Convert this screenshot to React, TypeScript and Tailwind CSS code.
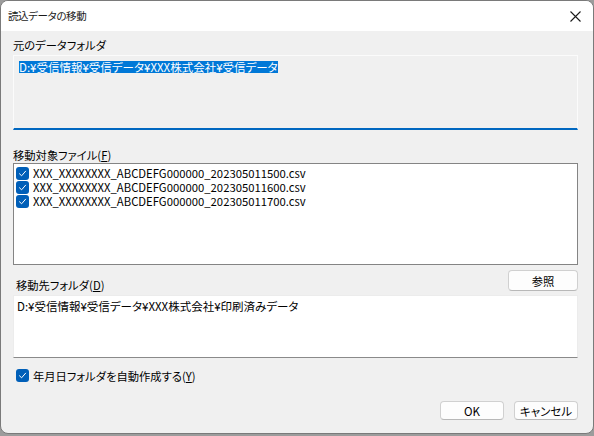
import React from 'react';

const files = [
  'XXX_XXXXXXXX_ABCDEFG000000_202305011500.csv',
  'XXX_XXXXXXXX_ABCDEFG000000_202305011600.csv',
  'XXX_XXXXXXXX_ABCDEFG000000_202305011700.csv',
];

function Check() {
  return (
    <span className="w-[13px] h-[13px] rounded-[3px] bg-[#005fb8] flex items-center justify-center shrink-0">
      <svg width="9" height="9" viewBox="0 0 9 9" fill="none">
        <path d="M1.5 4.8 L3.6 6.8 L7.6 2.2" stroke="#ffffff" strokeWidth="1" strokeLinecap="round" strokeLinejoin="round" />
      </svg>
    </span>
  );
}

function Button({ label }: { label: string }) {
  return (
    <button className="w-[64px] h-[19px] rounded-[4px] bg-[#fdfdfd] border border-[#d0d0d0] border-b-[#b8b8b8] text-[11.5px] leading-[12px] text-black">
      {label}
    </button>
  );
}

export default function App() {
  return (
    <div
      className="w-[594px] h-[436px] bg-[#9c9c9c] overflow-hidden text-black [font-feature-settings:'palt']"
      style={{ fontFamily: '"Noto Sans CJK JP", "Noto Sans", sans-serif' }}
    >
      <div className="w-[594px] h-[434px] rounded-[8px] border border-[#7a7a7a] bg-[#f0f0f0] flex flex-col overflow-hidden">
        {/* Title bar */}
        <div className="h-[30px] bg-white flex items-center justify-between pl-[7px] pr-[10px] shrink-0">
          <span className="text-[10.5px] leading-[14px] tracking-[-0.4px] text-[#1a1a1a]">読込データの移動</span>
          <svg width="11" height="11" viewBox="0 0 11 11" className="mr-[2px]">
            <path d="M0.5 0.5 L10.5 10.5 M10.5 0.5 L0.5 10.5" stroke="#1a1a1a" strokeWidth="1.1" />
          </svg>
        </div>

        <div className="flex flex-col pl-[12px] text-[11.3px]">
          {/* Source folder */}
          <div className="mt-[7px] h-[14px] leading-[14px]">元のデータフォルダ</div>
          <div className="mt-[3px] w-[565px] h-[75px] bg-[#f0f0f0] border border-[#fbfbfb] border-b-2 border-b-[#0067c0] pl-[5px] pt-[3px]">
            <span className="inline-block h-[12px] leading-[12px] text-[11.5px] bg-[#0078d7] text-white">
              D:¥受信情報¥受信データ¥XXX株式会社¥受信データ
            </span>
          </div>

          {/* Target files */}
          <div className="mt-[18px] h-[14px] leading-[14px]">
            移動対象ファイル(<span className="underline">F</span>)
          </div>
          <div className="mt-[1px] w-[565px] h-[102px] bg-white border border-[#848484] pl-[2px] pt-[2px] flex flex-col">
            {files.map((f) => (
              <div key={f} className="h-[14px] flex items-center gap-[4px]">
                <Check />
                <span className="leading-[12px]">{f}</span>
              </div>
            ))}
          </div>

          {/* Destination */}
          <div className="mt-[5px] w-[565px] h-[21px] flex items-start justify-between">
            <div className="mt-[8px] ml-[3px] h-[14px] leading-[14px]">
              移動先フォルダ(<span className="underline">D</span>)
            </div>
            <button className="w-[70px] h-[21px] rounded-[4px] bg-[#fdfdfd] border border-[#d0d0d0] border-b-[#b8b8b8] leading-[12px]">
              参照
            </button>
          </div>
          <div className="mt-[4px] w-[565px] h-[63px] bg-white border border-[#ececec] border-b-[#8a8a8a] pl-[3px] pt-[3px] text-[11.5px] leading-[14px]">
            D:¥受信情報¥受信データ¥XXX株式会社¥印刷済みデータ
          </div>

          {/* Auto create */}
          <div className="mt-[11px] ml-[3px] h-[13px] flex items-center gap-[4px]">
            <Check />
            <span className="leading-[14px]">
              年月日フォルダを自動作成する(<span className="underline">Y</span>)
            </span>
          </div>

          {/* Actions */}
          <div className="mt-[19px] w-[565px] flex justify-end gap-[10px]">
            <Button label="OK" />
            <Button label="キャンセル" />
          </div>
        </div>
      </div>
    </div>
  );
}
